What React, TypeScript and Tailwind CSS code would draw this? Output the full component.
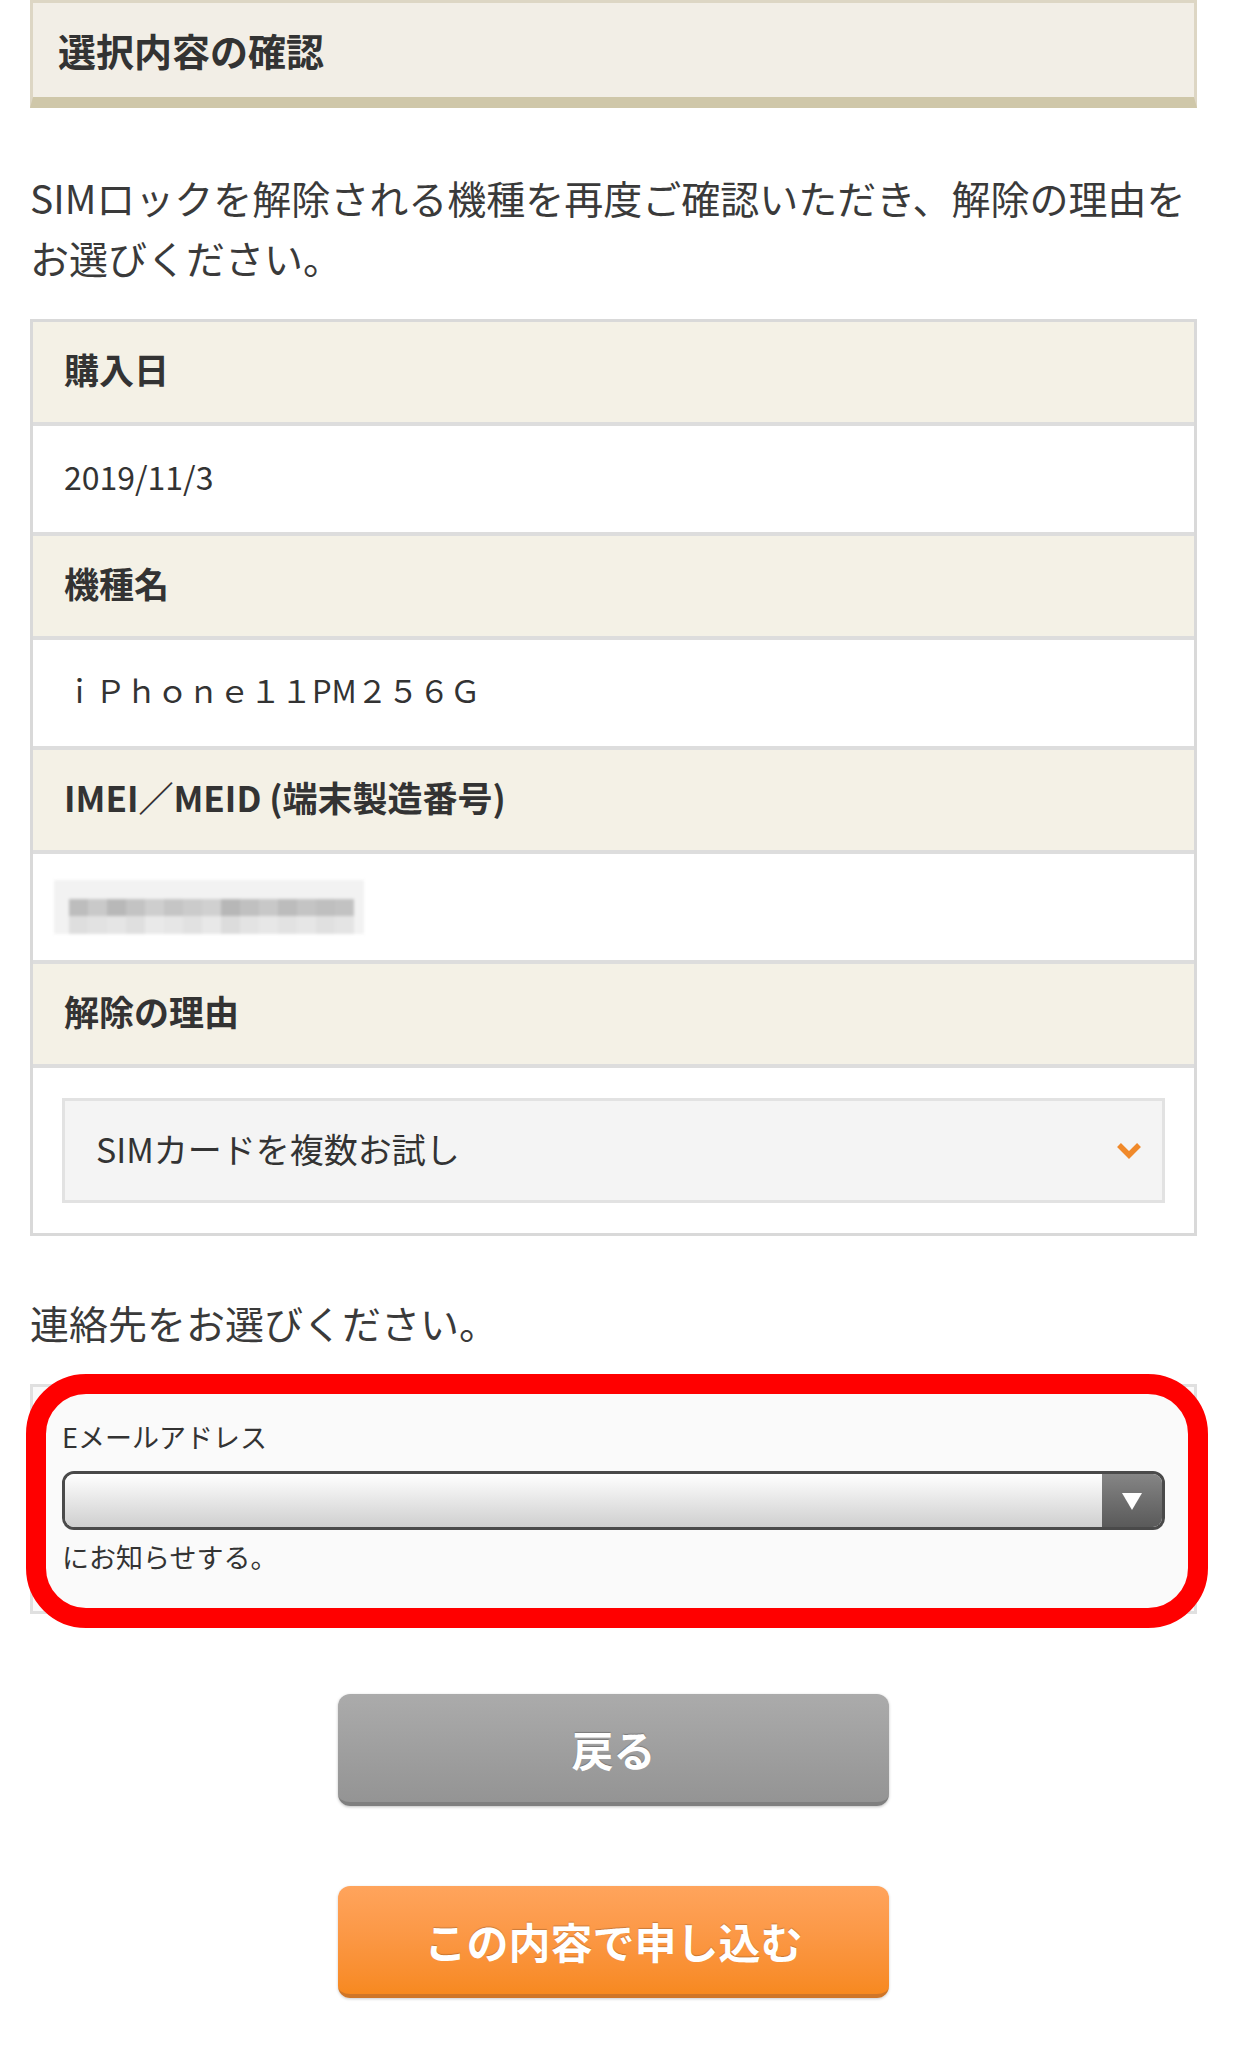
const font = { fontFamily: '"Noto Sans CJK JP", "Noto Sans", sans-serif' };

const midShades = ['#bdbdbd', '#c9c9c9', '#b8b8b8', '#c3c3c3', '#cecece', '#c5c5c5', '#cbcbcb', '#d0d0d0', '#b7b7b7', '#c0c0c0', '#c8c8c8', '#bcbcbc', '#c4c4c4', '#bfbfbf', '#c2c2c2'];
const lowShades = ['#dedede', '#e2e2e2', '#e5e5e5', '#dfdfdf', '#e9e9e9', '#e6e6e6', '#e1e1e1', '#e8e8e8', '#dcdcdc', '#e3e3e3', '#e7e7e7', '#e2e2e2', '#e6e6e6', '#e0e0e0', '#e4e4e4'];

function HeadRow({ children }: { children: React.ReactNode }) {
  return (
    <div className="h-[100px] bg-[#f4f1e6] flex items-center pl-[31px] pb-[5px] text-[35px] font-bold text-[#333]">
      {children}
    </div>
  );
}

function ValueRow({ children }: { children: React.ReactNode }) {
  return (
    <div className="h-[106px] bg-white flex items-center pl-[31px] pb-[6px] text-[32px] text-[#333]">
      {children}
    </div>
  );
}

function Sep() {
  return <div className="h-[4px] bg-[#dddddd]" />;
}

function Blurred() {
  return (
    <div className="ml-[-10px] mt-[6px] w-[310px] h-[54px] bg-[#f2f2f2] flex flex-col blur-[1.5px]">
      <div className="h-[19px]" />
      <div className="flex h-[17px] pl-[15px]">
        {midShades.map((c, i) => (
          <div key={i} className="w-[19px] h-full" style={{ backgroundColor: c }} />
        ))}
      </div>
      <div className="flex h-[18px] pl-[15px]">
        {lowShades.map((c, i) => (
          <div key={i} className="w-[19px] h-full" style={{ backgroundColor: c }} />
        ))}
      </div>
    </div>
  );
}

export default function App() {
  return (
    <div className="min-h-screen bg-white" style={font}>
      <div className="ml-[30px] w-[1167px] pb-[57px]">
        <div className="h-[108px] bg-[#f2eee6] border-x-[3px] border-t-[3px] border-[#ddd6c4] border-b-[11px] border-b-[#cfc7a9] flex items-center pl-[25px] pb-[2px]">
          <h1 className="text-[38px] font-bold text-[#333]">選択内容の確認</h1>
        </div>

        <p className="mt-[59px] mb-[32px] text-[39px] leading-[60px] text-[#3a3a3a] whitespace-nowrap">
          SIMロックを解除される機種を再度ご確認いただき、解除の理由を
          <br />
          お選びください。
        </p>

        <div className="border-[3px] border-[#d9d9d9]">
          <HeadRow>購入日</HeadRow>
          <Sep />
          <ValueRow>2019/11/3</ValueRow>
          <Sep />
          <HeadRow>機種名</HeadRow>
          <Sep />
          <ValueRow>
            <span className="text-[31px]">ｉＰｈｏｎｅ１１PM２５６Ｇ</span>
          </ValueRow>
          <Sep />
          <HeadRow>IMEI／MEID (端末製造番号)</HeadRow>
          <Sep />
          <ValueRow>
            <Blurred />
          </ValueRow>
          <Sep />
          <HeadRow>解除の理由</HeadRow>
          <Sep />
          <div className="bg-white px-[29px] py-[30px]">
            <div className="h-[105px] bg-[#f4f4f4] border-[3px] border-[#e2e2e2] flex items-center justify-between pl-[31px] pr-[20px]">
              <span className="text-[34px] text-[#333] pb-[4px]">SIMカードを複数お試し</span>
              <svg width="26" height="18" viewBox="0 0 26 18" fill="none">
                <path d="M3 3 L13 13 L23 3" stroke="#f0892a" strokeWidth="5.5" strokeLinecap="butt" strokeLinejoin="miter" />
              </svg>
            </div>
          </div>
        </div>

        <p className="mt-[56px] mb-[32px] text-[39px] leading-[60px] text-[#3a3a3a]">連絡先をお選びください。</p>

        <div className="relative border-[3px] border-[#e0e0e0] bg-[#fafafa] px-[29px] pt-[32px] pb-[36px]">
          <div className="text-[27px] leading-[36px] text-[#333]">Eメールアドレス</div>
          <div className="mt-[16px] h-[59px] rounded-[12px] border-[3px] border-[#4a4a4a] flex overflow-hidden">
            <div className="flex-1 bg-gradient-to-b from-white to-[#cfcfcf]" />
            <div className="w-[60px] bg-gradient-to-b from-[#858585] to-[#5a5a5a] flex items-center justify-center">
              <svg width="22" height="20" viewBox="0 0 22 20">
                <path d="M1 2 L21 2 L11 19 Z" fill="#ffffff" />
              </svg>
            </div>
          </div>
          <div className="mt-[9px] text-[27px] leading-[36px] text-[#333]">にお知らせする。</div>
          <div className="absolute left-[-7px] top-[-13px] w-[1182px] h-[254px] rounded-[60px] border-[20px] border-[#ff0000] pointer-events-none" />
        </div>

        <div className="flex flex-col items-center">
          <button className="mt-[80px] w-[551px] h-[112px] rounded-[12px] bg-gradient-to-b from-[#ababab] to-[#949494] border-b-[4px] border-[#7f7f7f] shadow-[0_1px_3px_rgba(0,0,0,0.25)] text-[42px] font-bold text-white [text-shadow:0_-1px_1px_rgba(0,0,0,0.25)]">
            戻る
          </button>
          <button className="mt-[80px] w-[551px] h-[112px] rounded-[12px] bg-gradient-to-b from-[#ffa45c] to-[#f7891f] border-b-[4px] border-[#cf7628] shadow-[0_1px_3px_rgba(0,0,0,0.2)] text-[42px] font-bold text-white [text-shadow:0_-1px_1px_rgba(0,0,0,0.2)]">
            この内容で申し込む
          </button>
        </div>
      </div>
    </div>
  );
}
